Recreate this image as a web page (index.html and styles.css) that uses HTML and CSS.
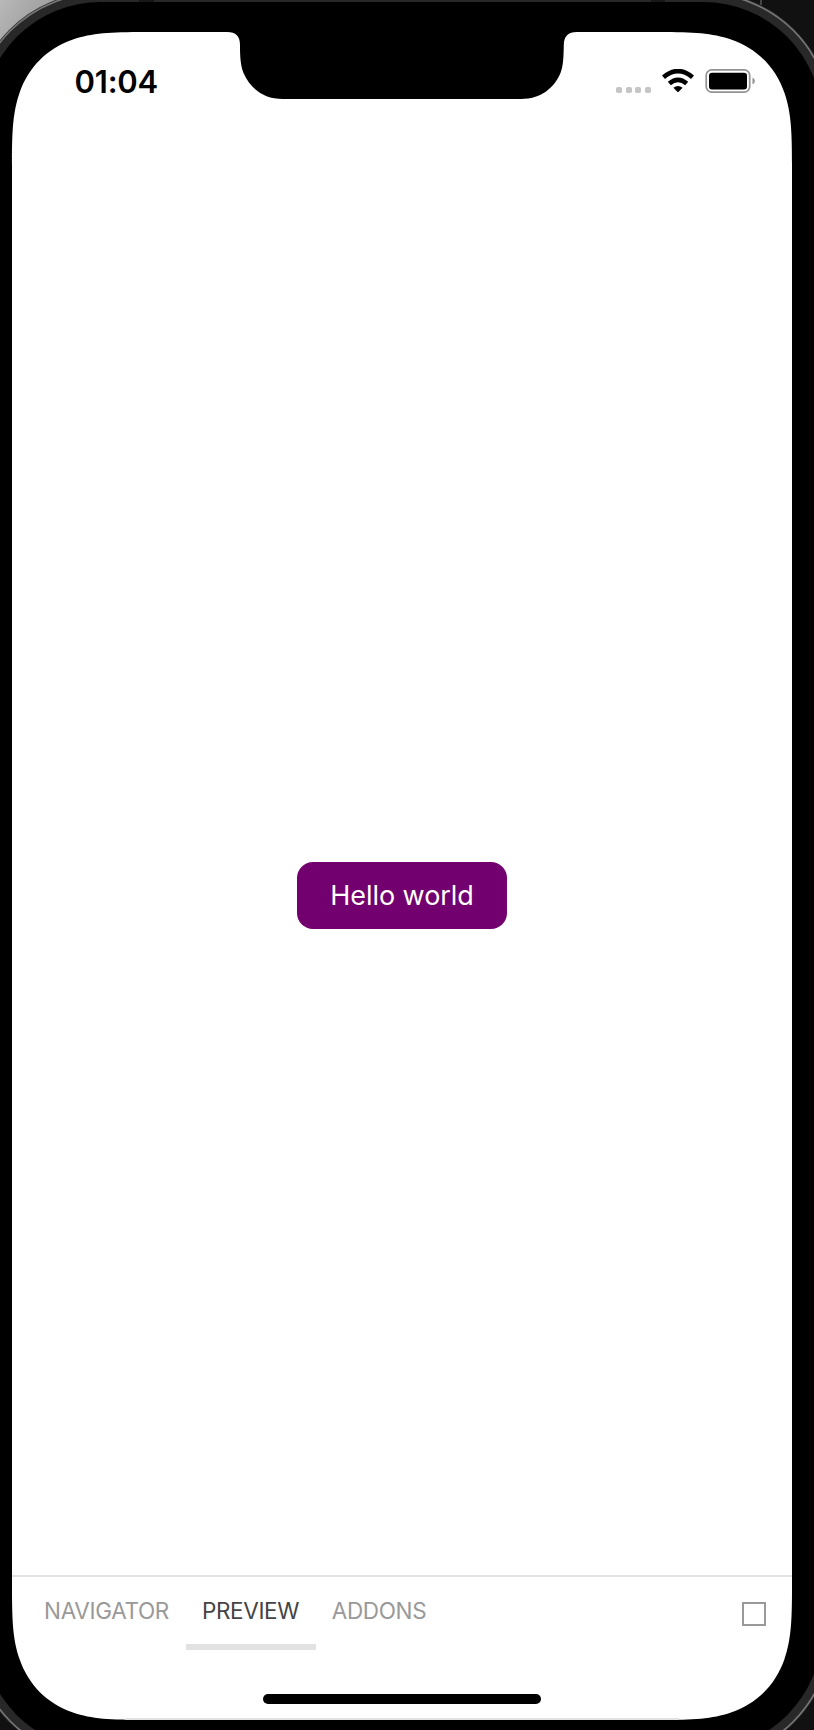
FILE: index.html
```html
<!DOCTYPE html>
<html lang="en">
<head>
<meta charset="utf-8">
<title>Preview</title>
<link rel="stylesheet" href="styles.css">
</head>
<body>
<div class="device">
  <svg class="frame" viewBox="0 0 814 1730" aria-hidden="true">
    <defs>
      <linearGradient id="desk" x1="0" y1="0" x2="1" y2="0.5"><stop offset="0" stop-color="#b8b8b8"/><stop offset="1" stop-color="#858585"/></linearGradient>
    </defs>
    <rect width="814" height="1730" fill="#111"/>
    <rect width="90" height="70" fill="url(#desk)"/>
    <path d="M761 0v5" stroke="#444" stroke-width="2"/>
    <rect x="-28" y="-8" width="860" height="1768" rx="128" fill="#333"/>
    <rect x="-26.5" y="-6.5" width="857" height="1765" rx="126.500" fill="#282828" stroke="#777" stroke-width="1.600"/>
    <path d="M139 0h15v2h-15zM651 0h14v2h-14z" fill="#181818"/>
    <rect x="-18" y="2" width="840" height="1748" rx="119" fill="#000"/>
    <path fill="#fff" d="M12 165C12 130 13 112 19.500 93C28.500 67 47 48.500 73 39.500C92 33 110 32 145 32H227C236 32 240 36 240 45C240 57 240.500 65 243.500 73C250 88 263 99 283 99H521C541 99 554 88 560.500 73C563.500 65 563.500 57 563.800 45C564 36 568 32 577 32H659C694 32 712 33 731 39.500C757 48.500 775.500 67 784.500 93C791 112 792 130 792 165V1587C792 1622 791 1640 784.500 1659C775.500 1685 757 1703.500 731 1712.500C712 1719 694 1720 659 1720H145C110 1720 92 1719 73 1712.500C47 1703.500 28.500 1685 19.500 1659C13 1640 12 1622 12 1587Z"/>
    <path d="M125 1719H679" stroke="#e0e2e1" stroke-width="2"/>
  </svg>
  <main class="screen">
    <header class="status">
      <span class="time">01:04</span>
      <span class="indicators">
        <span class="dots"><i class="dot"></i><i class="dot"></i><i class="dot"></i><i class="dot"></i></span>
        <svg class="wifi" width="32" height="24" viewBox="0 0 32 24" fill="none" stroke="#000" stroke-width="4.600">
          <path d="M1.500 8.200Q16-4 30.500 8.200M7.300 14.600Q16 7.200 24.700 14.600"/>
          <path fill="#000" stroke="none" d="M11.400 18.700Q16 15.300 20.600 18.700L16.700 22.700Q16 23.300 15.300 22.700Z"/>
        </svg>
        <svg class="battery" width="50" height="24" viewBox="0 0 50 24">
          <rect x="1.200" y="0.900" width="43.500" height="22.200" rx="5.500" fill="none" stroke="#949294" stroke-width="1.700"/>
          <rect x="4" y="3.700" width="38" height="16.800" rx="3" fill="#000"/>
          <path d="M47.500 8.500Q49.900 9.600 49.900 12T47.500 15.500Z" fill="#949294"/>
        </svg>
      </span>
    </header>
    <section class="canvas"><button class="hello">Hello world</button></section>
    <nav class="tabs">
      <a class="tab navigator">NAVIGATOR</a>
      <a class="tab active">PREVIEW</a>
      <a class="tab addons">ADDONS</a>
      <span class="toggle"></span>
    </nav>
    <footer class="home"><span class="home-bar"></span></footer>
  </main>
</div>
</body>
</html>
```
FILE: styles.css
```css
* { box-sizing: border-box; }
body { margin: 0; font-family: Inter, "Liberation Sans", sans-serif; }
.device { position: relative; width: 814px; height: 1730px; overflow: hidden; padding: 32px 22px 10px 12px; }
.frame { position: absolute; inset: 0; width: 814px; height: 1730px; }
.screen { position: relative; display: flex; flex-direction: column; height: 1688px; }
.status { display: flex; justify-content: space-between; align-items: flex-start; height: 72px; padding: 37px 37px 0 62.500px; }
.time { font-size: 31px; line-height: 24px; font-weight: 600; padding-top: 1px; letter-spacing: -0.2px; }
.indicators { display: flex; align-items: flex-start; }
.dots { display: flex; gap: 3.400px; margin: 17.500px 11.500px 0 0; }
.dot { width: 6px; height: 6px; border-radius: 1.800px; background: #c5c5c7; }
.wifi { margin-right: 11px; }
.canvas { flex: 1; display: flex; align-items: flex-start; justify-content: center; padding-top: 758.300px; }
.hello { width: 210px; height: 67px; padding: 0; border: 0; border-radius: 16px; background: #73006f; color: #fff; font: 400 27px/67px Inter, "Liberation Sans", sans-serif; letter-spacing: -0.05px; }
.tabs { display: flex; height: 75px; border-top: 2px solid #e2e4e3; padding-right: 26px; }
.tab { height: 73px; padding-top: 20px; text-align: center; color: #999; font-size: 22.500px; line-height: 28px; letter-spacing: -0.35px; }
.navigator { width: 174px; padding-left: 15px; }
.active { width: 130px; padding-right: 1px; color: #444; border-bottom: 6px solid #e2e2e2; }
.addons { width: 126px; }
.toggle { width: 24px; height: 24px; margin: 25px 0 0 auto; border: 2px solid #999; }
.home { height: 70px; padding: 44px 0 0; display: flex; justify-content: center; }
.home-bar { width: 278px; height: 10px; border-radius: 5px; background: #000; }
```
